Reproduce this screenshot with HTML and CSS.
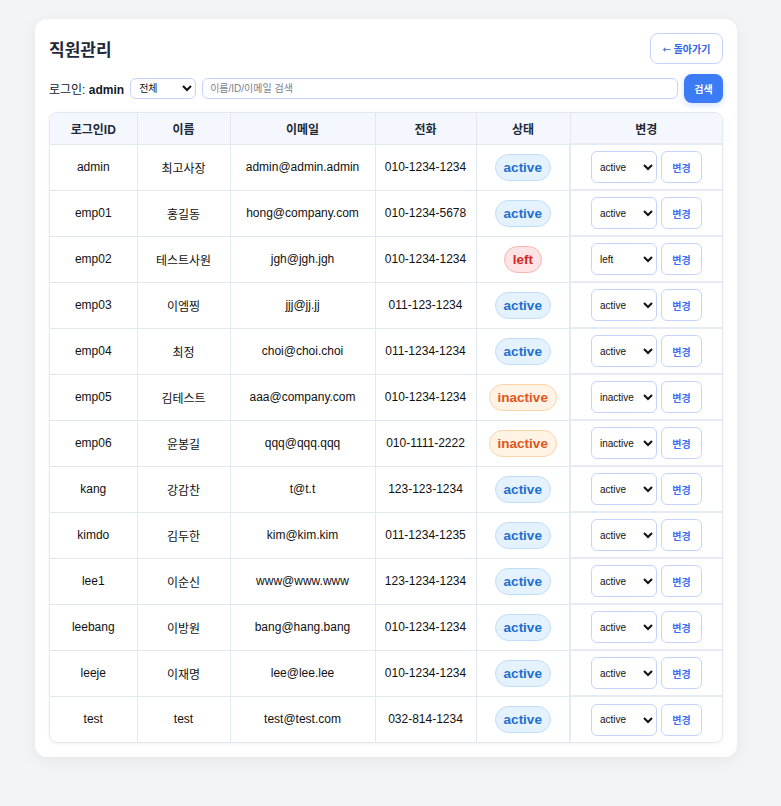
FILE: index.html
```html
<!DOCTYPE html>
<html lang="ko">
<head>
<meta charset="utf-8">
<title>직원관리</title>
<link rel="stylesheet" href="styles.css">
</head>
<body>
<div class="card">
  <div class="header">
    <h1 class="title">직원관리</h1>
    <button class="back-btn"><span class="arrow">←</span> 돌아가기</button>
  </div>
  <div class="toolbar">
    <span class="login">로그인: <b>admin</b></span>
    <select class="filter"><option>전체</option></select>
    <input class="search" type="text" placeholder="이름/ID/이메일 검색">
    <button class="search-btn">검색</button>
  </div>
  <div class="table-wrap">
    <table class="staff">
      <colgroup>
        <col class="c1"><col class="c2"><col class="c3"><col class="c4"><col class="c5"><col class="c6">
      </colgroup>
      <thead>
        <tr><th>로그인ID</th><th>이름</th><th>이메일</th><th>전화</th><th>상태</th><th>변경</th></tr>
      </thead>
      <tbody>
        <tr><td>admin</td><td>최고사장</td><td>admin@admin.admin</td><td>010-1234-1234</td><td><span class="badge active">active</span></td><td class="act"><div class="act-in"><select class="st"><option>active</option></select><button class="chg">변경</button></div></td></tr>
        <tr><td>emp01</td><td>홍길동</td><td>hong@company.com</td><td>010-1234-5678</td><td><span class="badge active">active</span></td><td class="act"><div class="act-in"><select class="st"><option>active</option></select><button class="chg">변경</button></div></td></tr>
        <tr><td>emp02</td><td>테스트사원</td><td>jgh@jgh.jgh</td><td>010-1234-1234</td><td><span class="badge left">left</span></td><td class="act"><div class="act-in"><select class="st"><option>left</option></select><button class="chg">변경</button></div></td></tr>
        <tr><td>emp03</td><td>이엠찡</td><td>jjj@jj.jj</td><td>011-123-1234</td><td><span class="badge active">active</span></td><td class="act"><div class="act-in"><select class="st"><option>active</option></select><button class="chg">변경</button></div></td></tr>
        <tr><td>emp04</td><td>최정</td><td>choi@choi.choi</td><td>011-1234-1234</td><td><span class="badge active">active</span></td><td class="act"><div class="act-in"><select class="st"><option>active</option></select><button class="chg">변경</button></div></td></tr>
        <tr><td>emp05</td><td>김테스트</td><td>aaa@company.com</td><td>010-1234-1234</td><td><span class="badge inactive">inactive</span></td><td class="act"><div class="act-in"><select class="st"><option>inactive</option></select><button class="chg">변경</button></div></td></tr>
        <tr><td>emp06</td><td>윤봉길</td><td>qqq@qqq.qqq</td><td>010-1111-2222</td><td><span class="badge inactive">inactive</span></td><td class="act"><div class="act-in"><select class="st"><option>inactive</option></select><button class="chg">변경</button></div></td></tr>
        <tr><td>kang</td><td>강감찬</td><td>t@t.t</td><td>123-123-1234</td><td><span class="badge active">active</span></td><td class="act"><div class="act-in"><select class="st"><option>active</option></select><button class="chg">변경</button></div></td></tr>
        <tr><td>kimdo</td><td>김두한</td><td>kim@kim.kim</td><td>011-1234-1235</td><td><span class="badge active">active</span></td><td class="act"><div class="act-in"><select class="st"><option>active</option></select><button class="chg">변경</button></div></td></tr>
        <tr><td>lee1</td><td>이순신</td><td>www@www.www</td><td>123-1234-1234</td><td><span class="badge active">active</span></td><td class="act"><div class="act-in"><select class="st"><option>active</option></select><button class="chg">변경</button></div></td></tr>
        <tr><td>leebang</td><td>이방원</td><td>bang@hang.bang</td><td>010-1234-1234</td><td><span class="badge active">active</span></td><td class="act"><div class="act-in"><select class="st"><option>active</option></select><button class="chg">변경</button></div></td></tr>
        <tr><td>leeje</td><td>이재명</td><td>lee@lee.lee</td><td>010-1234-1234</td><td><span class="badge active">active</span></td><td class="act"><div class="act-in"><select class="st"><option>active</option></select><button class="chg">변경</button></div></td></tr>
        <tr><td>test</td><td>test</td><td>test@test.com</td><td>032-814-1234</td><td><span class="badge active">active</span></td><td class="act"><div class="act-in"><select class="st"><option>active</option></select><button class="chg">변경</button></div></td></tr>
      </tbody>
    </table>
  </div>
</div>
</body>
</html>
```

FILE: styles.css
```css
* { box-sizing: border-box; }
html, body { margin: 0; padding: 0; }
body {
  background: #f3f4f6;
  font-family: "Liberation Sans", "Noto Sans CJK KR", sans-serif;
  color: #111827;
  padding: 19px 0 48px 35px;
}
.card {
  width: 702px;
  background: #fff;
  border-radius: 12px;
  padding: 14px;
  box-shadow: 0 4px 18px rgba(15, 23, 42, 0.06);
}
.header {
  display: flex;
  align-items: center;
  justify-content: space-between;
  height: 31px;
}
.title {
  margin: 0;
  font-size: 17px;
  font-weight: 700;
  color: #1f2937;
}
.back-btn {
  height: 31px;
  width: 73px;
  padding: 0;
  background: #fff;
  border: 1px solid #c7d2fe;
  border-radius: 8px;
  color: #2f64e8;
  font-family: "Liberation Sans", "Noto Sans CJK KR", sans-serif;
  font-size: 10px;
  font-weight: 700;
}
.arrow {
  font-family: "DejaVu Sans", sans-serif;
  font-weight: 400;
  font-size: 10px;
}
.toolbar {
  display: flex;
  align-items: center;
  gap: 6px;
  margin-top: 10px;
  height: 29px;
}
.login {
  font-size: 12px;
  color: #111827;
}
.login b { font-weight: 700; }
.filter {
  width: 66px;
  height: 21px;
  border: 1px solid #c7d2fe;
  border-radius: 6px;
  background: #fff;
  font-family: "Liberation Sans", "Noto Sans CJK KR", sans-serif;
  font-size: 10px;
  padding: 0 4px;
  color: #111;
}
.search {
  flex: 1;
  height: 21px;
  border: 1px solid #c7d2fe;
  border-radius: 6px;
  font-family: "Liberation Sans", "Noto Sans CJK KR", sans-serif;
  font-size: 10px;
  padding: 0 7px;
  color: #111;
}
.search::placeholder { color: #7b8190; }
.search-btn {
  width: 39px;
  height: 29px;
  padding: 0;
  border: none;
  border-radius: 8px;
  background: #3b7bf6;
  color: #fff;
  font-family: "Liberation Sans", "Noto Sans CJK KR", sans-serif;
  font-size: 10px;
  font-weight: 700;
  box-shadow: 0 2px 6px rgba(59, 123, 246, 0.25);
}
.table-wrap {
  margin-top: 9px;
  border: 1px solid #e2e8f0;
  border-radius: 8px;
  overflow: hidden;
  box-shadow: 0 1px 3px rgba(15, 23, 42, 0.06);
}
.staff {
  width: 100%;
  border-collapse: collapse;
  table-layout: fixed;
}
.c1 { width: 87px; }
.c2 { width: 93px; }
.c3 { width: 145px; }
.c4 { width: 101px; }
.c5 { width: 94px; }
.c6 { width: auto; }
.staff th {
  height: 31px;
  background: #f4f7fd;
  font-size: 12px;
  font-weight: 700;
  color: #1f2937;
  border: 1px solid #e2e8f0;
  border-top: none;
  padding: 0;
}
.staff td {
  height: 46px;
  font-size: 12px;
  color: #111;
  text-align: center;
  border: 1px solid #e2e8f0;
  padding: 0;
}
.staff th:first-child, .staff td:first-child { border-left: none; }
.staff th:last-child, .staff td:last-child { border-right: none; }
.staff tbody tr:last-child td { border-bottom: none; }
.staff td.act {
  border-left: 2px solid #e6ebf3;
  border-top: 2px solid #e6ebf3;
}
.act-in {
  display: flex;
  justify-content: center;
  align-items: center;
  gap: 4px;
}
.badge {
  display: inline-block;
  font-size: 13.5px;
  font-weight: 700;
  line-height: 17px;
  padding: 4px 8px;
  border-radius: 14px;
  border: 1px solid;
}
.badge.active { color: #1e6fcf; background: #e4f2fd; border-color: #bfdcf8; }
.badge.left { color: #d42a2a; background: #fde3e3; border-color: #f9b3b3; }
.badge.inactive { color: #e0561a; background: #fff3e6; border-color: #fbd3a6; }
.st {
  width: 66px;
  height: 32px;
  border: 1px solid #c7d2fe;
  border-radius: 6px;
  background: #fff;
  font-family: "Liberation Sans", "Noto Sans CJK KR", sans-serif;
  font-size: 10px;
  padding: 0 2px 0 4px;
  color: #111;
}
.chg {
  width: 41px;
  height: 32px;
  padding: 0;
  border: 1px solid #c7d2fe;
  border-radius: 6px;
  background: #fff;
  color: #3b6ff5;
  font-family: "Liberation Sans", "Noto Sans CJK KR", sans-serif;
  font-size: 10px;
  font-weight: 700;
}
```
